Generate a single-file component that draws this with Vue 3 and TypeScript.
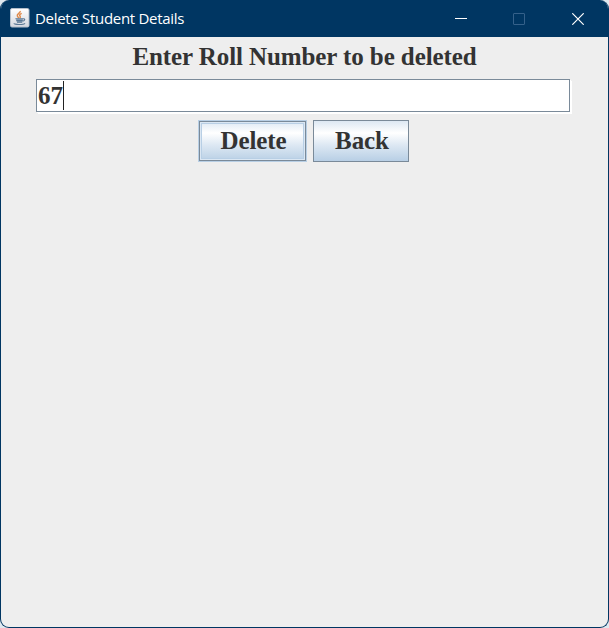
<script setup lang="ts">
import { ref } from 'vue'

const roll = ref('67')
</script>

<template>
  <div class="window">
    <header class="titlebar">
      <svg class="java" width="20" height="20" viewBox="0 0 20 20">
        <defs>
          <linearGradient id="tile" x1="0" y1="0" x2="0" y2="1">
            <stop offset="0" stop-color="#ffffff" />
            <stop offset="1" stop-color="#d3d7de" />
          </linearGradient>
        </defs>
        <rect x="0.5" y="0.5" width="18.5" height="18.5" rx="1.5" fill="url(#tile)" stroke="#b4bfcb" />
        <path d="M10.2 3c.5 2-3.600 2.800-2.900 4.900.2.800 1 1.400 1.600 2.100M11.700 5.400c-2.600 1.200-2.300 2-1.500 3 .4.600 0 1.100-.4 1.500" fill="none" stroke="#e08a4a" stroke-width="1.500" />
        <path d="M6 11h7l-.8 3.300H7z" fill="#8fa5bb" />
        <path d="M5.400 10.700h7.600M6.300 12.600h6.300M7 14.200h5.200M13.100 10.900c2.400-.6 2 1.900-.4 2.400M4.200 15.200c-.6 1.700 9.600 1.700 10.800.1" fill="none" stroke="#5b7894" stroke-width="1.100" />
      </svg>
      <h1 class="title">Delete Student Details</h1>
      <div class="controls">
        <svg class="minimize" width="12" height="12" viewBox="0 0 12 12"><path d="M0 5.500h12" stroke="#fff" /></svg>
        <svg width="12" height="12" viewBox="0 0 12 12"><rect x="0.5" y="0.5" width="11" height="11" rx="0.5" fill="none" stroke="#35618a" /></svg>
        <svg width="12" height="12" viewBox="0 0 12 12"><path d="M.3.3l11.400 11.400M11.700.3L.3 11.700" stroke="#fff" stroke-width="1.200" /></svg>
      </div>
    </header>
    <main class="content">
      <label class="prompt">Enter Roll Number to be deleted</label>
      <div class="field"><span class="value">{{ roll }}</span><i class="caret"></i></div>
      <div class="actions">
        <button class="btn focused">Delete</button>
        <button class="btn back">Back</button>
      </div>
    </main>
  </div>
</template>

<style>
body { background: #dfe8ef; }
</style>

<style scoped>
.window {
  box-sizing: border-box;
  width: 609px;
  height: 628px;
  border: 1px solid #003662;
  border-top: 0;
  border-radius: 9px;
  overflow: hidden;
  background: #eeeeee;
}
.titlebar {
  display: flex;
  align-items: center;
  height: 37px;
  padding: 0 24px 0 9px;
  box-sizing: border-box;
  background: #003662;
}
.java { flex: none; margin-bottom: 2px; }
.title {
  margin: 0 0 2px 5px;
  font: 400 15px/20px "Open Sans", "Noto Sans", sans-serif;
  letter-spacing: -0.3px;
  white-space: nowrap;
  color: #fff;
}
.controls { display: flex; gap: 47px; margin-left: auto; }
.controls svg { display: block; }
.controls .minimize { margin-right: -1px; }
.content {
  display: flex;
  flex-direction: column;
  align-items: center;
  font: bold 25px/28px "Liberation Serif", serif;
  color: #333;
}
.prompt { margin-top: 6px; white-space: nowrap; letter-spacing: -0.09px; }
.field {
  display: flex;
  box-sizing: border-box;
  width: 534px;
  height: 33px;
  margin: 8px 3px 0 0;
  padding: 1px 1px;
  border: 1px solid #7a8a99;
  background: #fff;
  box-shadow: 1px 1px 0 #fff, 2px 2px 0 #fff;
}
.value { line-height: 29px; }
.caret { width: 1px; height: 29px; background: #222; }
.actions { display: flex; align-items: center; gap: 6px; margin: 8px 2px 0 0; }
.btn {
  box-sizing: border-box;
  width: 96px;
  height: 42px;
  padding: 0 0 1px 2px;
  border: 1px solid #7a8a99;
  border-radius: 0;
  background: linear-gradient(#dde8f3 0%, #ffffff 30%, #dde8f3 60%, #b8cfe5 100%);
  font: inherit;
  letter-spacing: -0.1px;
  color: #333;
}
.focused {
  width: 109px;
  border-color: #b8cfe5;
  box-shadow: inset 0 0 0 1px #7a8a99, inset 0 0 0 2px #dbe7f3, inset 0 0 0 3px #b8cfe5;
}
</style>
